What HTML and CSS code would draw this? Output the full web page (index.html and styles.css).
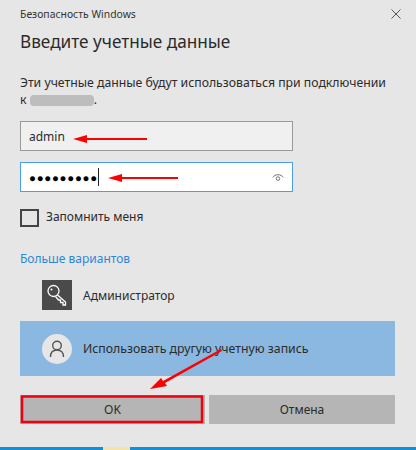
FILE: index.html
```html
<!DOCTYPE html>
<html lang="ru">
<head>
  <meta charset="UTF-8">
  <meta name="viewport" content="width=device-width, initial-scale=1.0">
  <title>Безопасность Windows</title>
  <link rel="stylesheet" href="styles.css">
</head>
<body>
  <div class="dialog">
    <div class="titlebar">
      <span class="app-name">Безопасность Windows</span>
      <svg class="close" width="10" height="10" viewBox="0 0 10 10">
        <path d="M0.5 0.5L9.500 9.500M9.500 0.5L0.5 9.500" stroke="#555" stroke-width="1" fill="none"/>
      </svg>
    </div>
    <h1>Введите учетные данные</h1>
    <p class="message">Эти учетные данные будут использоваться при подключении<br>к <span class="blur"></span>.</p>

    <div class="field field-user">admin</div>
    <div class="field field-pass">
      <span class="dots">●●●●●●●●●</span><span class="caret"></span>
      <svg class="eye" width="12" height="9" viewBox="0 0 12 9">
        <path d="M0.7 4.500C3 0.8 9 0.8 11.300 4.500" stroke="#777" stroke-width="1" fill="none"/>
        <circle cx="6" cy="5.600" r="1.800" stroke="#777" stroke-width="1" fill="none"/>
      </svg>
    </div>

    <div class="remember">
      <span class="checkbox"></span>
      <span class="remember-label">Запомнить меня</span>
    </div>

    <div class="more">Больше вариантов</div>

    <div class="account">
      <span class="tile">
        <svg width="24" height="24" viewBox="0 0 24 24">
          <circle cx="8.500" cy="8" r="5.500" stroke="#fff" stroke-width="1.300" fill="none"/>
          <circle cx="6.500" cy="6.500" r="1" fill="#fff"/>
          <path d="M12.500 12L20.500 19L20.500 22L18 22L18 19.500L15.500 19.500L15.500 17L13.500 17L10.500 13.500" stroke="#fff" stroke-width="1.300" fill="none"/>
        </svg>
      </span>
      <span>Администратор</span>
    </div>
    <div class="account account-selected">
      <span class="avatar">
        <svg width="16" height="18" viewBox="0 0 16 18">
          <circle cx="8" cy="5.500" r="4.300" stroke="#555" stroke-width="1.400" fill="none"/>
          <path d="M1.500 17C1.500 12.500 4 10 8 10C12 10 14.500 12.500 14.500 17" stroke="#555" stroke-width="1.400" fill="none"/>
        </svg>
      </span>
      <span class="other-account">Использовать другую учетную запись</span>
    </div>

    <div class="buttons">
      <div class="btn btn-ok">OK</div>
      <div class="btn">Отмена</div>
    </div>
  </div>

  <div class="taskbar"><span class="task-item"></span></div>

  <!-- red marks drawn over the screenshot -->
  <svg class="marks" width="416" height="450" viewBox="0 0 416 450">
    <path d="M73 139L87 135L87 138L147 138L147 140L87 140L87 143Z" fill="#f00"/>
    <path d="M108 178L122 174L122 177L178 177L178 179L122 179L122 182Z" fill="#f00"/>
    <path d="M150 389L161 378L163 381L221 349L222 351L165 383L167 386Z" fill="#f00"/>
    <rect x="22" y="396.500" width="180" height="25.500" stroke="#f0000c" stroke-width="2.500" fill="none"/>
  </svg>
</body>
</html>
```
FILE: styles.css
```css
html, body {
  margin: 0;
  padding: 0;
}

body {
  width: 416px;
  height: 450px;
  overflow: hidden;
  position: relative;
  background-color: #e6e6e6;
  color: #2b2b2b;
  font-family: 'Noto Sans', 'Open Sans', sans-serif;
  font-size: 12px;
}

.dialog {
  height: 447px;
  box-sizing: border-box;
  padding: 6px 21px 0 20px;
}

.titlebar {
  display: flex;
  align-items: center;
  justify-content: space-between;
  height: 16px;
  margin-right: -6px;
}

.app-name {
  font-size: 10.4px;
  color: #333;
}

h1 {
  margin: 6px 0 0;
  font-size: 17.2px;
  font-weight: 400;
  line-height: 28px;
}

.message {
  margin: 18px 0 0;
  font-size: 12.25px;
  line-height: 17px;
}

.blur {
  display: inline-block;
  width: 64px;
  height: 11px;
  border-radius: 4px;
  background-color: #bdbdbd;
  vertical-align: -2px;
}

.field {
  display: flex;
  align-items: center;
  width: 273px;
  height: 30px;
  box-sizing: border-box;
  padding: 0 8px;
  border: 1px solid #999;
  font-size: 12px;
}

.field-user {
  margin-top: 13px;
  background-color: #f0f0f0;
}

.field-pass {
  margin-top: 11px;
  border-color: #4a9ee8;
  background-color: #fff;
}

.dots {
  font-size: 11.5px;
  letter-spacing: 0.7px;
  color: #000;
}

.caret {
  width: 1px;
  height: 18px;
  background-color: #222;
}

.eye {
  margin-left: auto;
}

.remember {
  display: flex;
  align-items: center;
  gap: 7px;
  margin-top: 17px;
  height: 18px;
}

.remember-label {
  line-height: 16px;
  margin-bottom: 2px;
}

.checkbox {
  width: 19px;
  height: 18px;
  box-sizing: border-box;
  border: 2px solid #444;
}

.more {
  margin-top: 23px;
  color: #2b88d8;
  line-height: 17px;
}

.account {
  display: flex;
  align-items: center;
  gap: 11px;
  padding-left: 22px;
  margin-top: 13px;
  height: 30px;
}

.account-selected {
  height: 55px;
  margin-top: 11px;
  background-color: #8ab8e0;
}

.other-account {
  font-size: 12.3px;
}

.tile {
  display: flex;
  align-items: center;
  justify-content: center;
  width: 30px;
  height: 30px;
  background-color: #4a4a4a;
}

.avatar {
  display: flex;
  align-items: center;
  justify-content: center;
  width: 30px;
  height: 30px;
  border-radius: 50%;
  background-color: #e6e6e6;
}

.buttons {
  display: flex;
  gap: 4px;
  margin-top: 19px;
}

.btn {
  flex: 1;
  display: flex;
  align-items: center;
  justify-content: center;
  height: 29px;
  background-color: #b5b5b5;
}

.btn-ok {
  flex: none;
  width: 185px;
}

.taskbar {
  height: 3px;
  background-color: #1190d8;
  padding-left: 103px;
}

.task-item {
  display: block;
  width: 27px;
  height: 3px;
  background-color: #f3e3a8;
}

.marks {
  position: absolute;
  top: 0;
  left: 0;
  pointer-events: none;
}
```
